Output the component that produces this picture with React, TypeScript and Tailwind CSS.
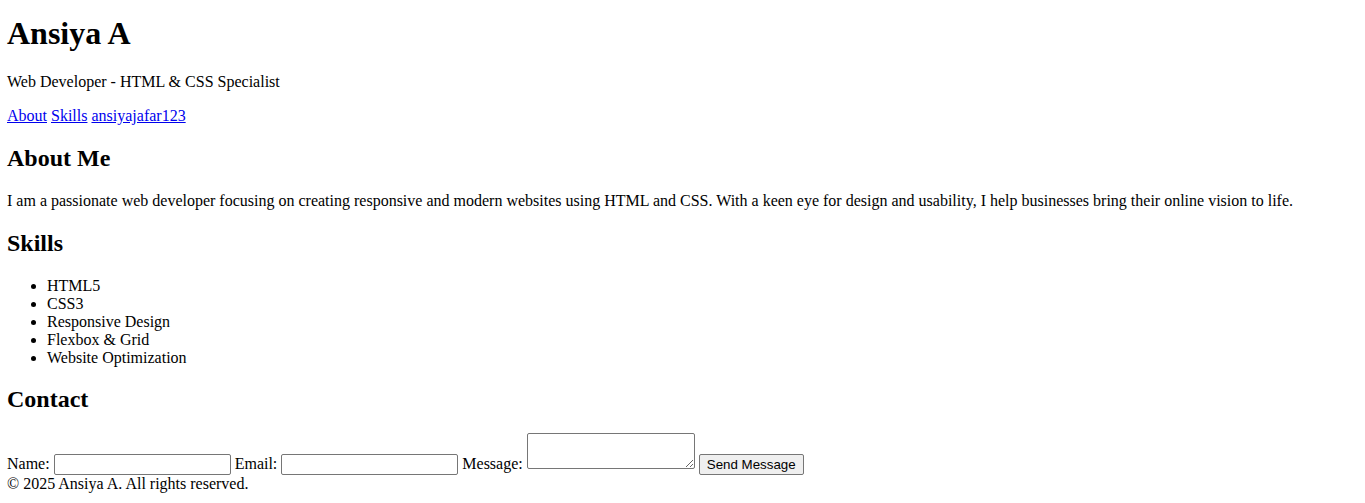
export default function App() {
  const skills = ["HTML5", "CSS3", "Responsive Design", "Flexbox & Grid", "Website Optimization"];
  const field = "w-[177px] h-[21px] border border-[#767676] rounded-[2px] px-[2px] py-[1px] bg-white text-[13.33px] font-['Liberation_Sans',sans-serif] align-baseline";

  return (
    <div className="mx-[7px] mb-2 font-['Liberation_Serif',serif] text-base leading-[normal] text-black bg-white">
      <header>
        <h1 className="text-[32px] font-bold mt-[14.5px] mb-[21.44px]">Ansiya A</h1>
        <p className="my-4">Web Developer - HTML &amp; CSS Specialist</p>
        <nav className="my-4">
          <a href="#about" className="text-[#0000ee] underline">About</a>{" "}
          <a href="#skills" className="text-[#0000ee] underline">Skills</a>{" "}
          <a href="#" className="text-[#0000ee] underline">ansiyajafar123</a>
        </nav>
      </header>

      <section id="about">
        <h2 className="text-[24px] font-bold my-[19.92px]">About Me</h2>
        <p className="my-4">
          I am a passionate web developer focusing on creating responsive and modern websites using HTML and CSS. With a keen eye for design and usability, I help businesses bring their online vision to life.
        </p>
      </section>

      <section id="skills">
        <h2 className="text-[24px] font-bold my-[19.92px]">Skills</h2>
        <ul className="list-disc pl-10 my-4">
          {skills.map(s => (
            <li key={s}>{s}</li>
          ))}
        </ul>
      </section>

      <section id="contact">
        <h2 className="text-[24px] font-bold my-[19.92px]">Contact</h2>
        <form onSubmit={e => e.preventDefault()}>
          <label>Name: </label>
          <input type="text" className={field} />{" "}
          <label>Email: </label>
          <input type="email" className={field} />{" "}
          <label>Message: </label>
          <textarea className="w-[168px] h-[36px] border border-[#767676] rounded-[2px] px-[2px] py-[1px] bg-white text-[13.33px] font-['Liberation_Mono',monospace] align-baseline" />{" "}
          <button type="submit" className="h-[21px] bg-[#efefef] border border-[#767676] rounded-[2px] px-[7px] py-[1px] text-[13.33px] font-['Liberation_Sans',sans-serif] text-black">
            Send Message
          </button>
        </form>
      </section>

      <footer>
        <p>&copy; 2025 Ansiya A. All rights reserved.</p>
      </footer>
    </div>
  );
}
